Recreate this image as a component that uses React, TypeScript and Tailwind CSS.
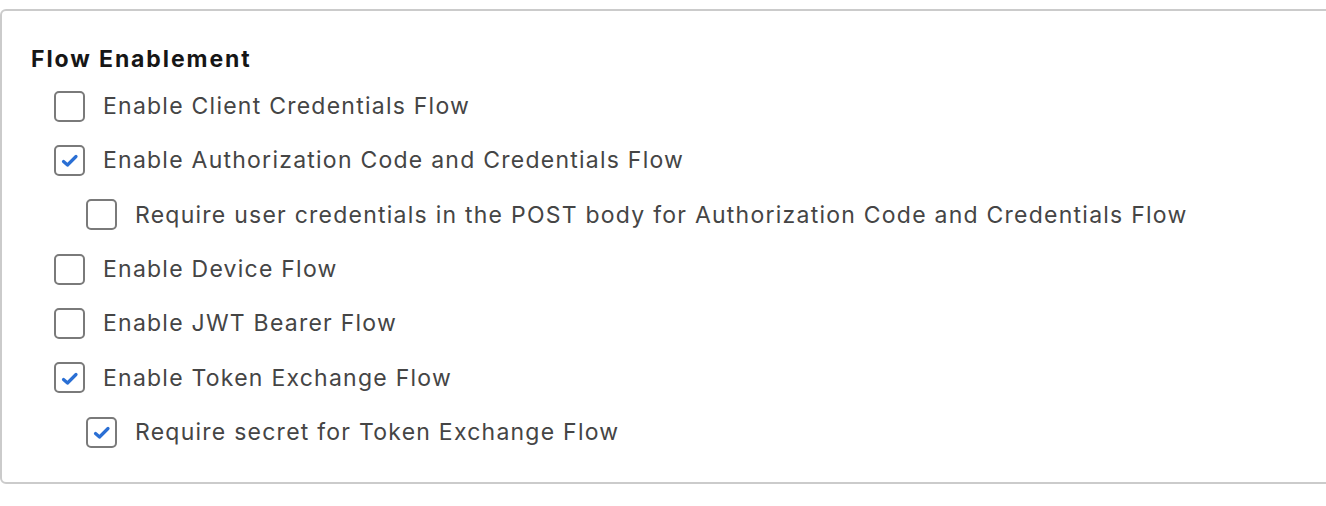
import React from "react";

type Item = { label: string; checked: boolean; nested?: boolean };

const ITEMS: Item[] = [
  { label: "Enable Client Credentials Flow", checked: false },
  { label: "Enable Authorization Code and Credentials Flow", checked: true },
  { label: "Require user credentials in the POST body for Authorization Code and Credentials Flow", checked: false, nested: true },
  { label: "Enable Device Flow", checked: false },
  { label: "Enable JWT Bearer Flow", checked: false },
  { label: "Enable Token Exchange Flow", checked: true },
  { label: "Require secret for Token Exchange Flow", checked: true, nested: true },
];

function Box({ checked }: { checked: boolean }) {
  return (
    <span className="w-[31px] h-[31px] flex-shrink-0 rounded-[5px] border-2 border-[#7a7a7a] bg-white flex items-center justify-center">
      {checked && (
        <svg width="18" height="14" viewBox="0 0 18 14" fill="none" className="mt-[2px]">
          <path d="M2.5 7.5 L6.5 11 L15 2.5" stroke="#2a6fd4" strokeWidth="3.2" strokeLinecap="round" strokeLinejoin="round" />
        </svg>
      )}
    </span>
  );
}

export default function App() {
  return (
    <div className="w-[1326px] h-[506px] bg-white pt-[9px] overflow-hidden" style={{ fontFamily: "Inter, 'Helvetica Neue', Arial, sans-serif" }}>
      <div className="w-[1340px] h-[475px] border-2 border-[#cbcbcb] rounded-[6px] pt-[34px] pl-[29px]">
        <h2 className="text-[23px] leading-[28px] font-bold tracking-[1.9px] text-[#161616] mb-[6px]">Flow Enablement</h2>
        <div className="flex flex-col">
          {ITEMS.map((it) => (
            <label
              key={it.label}
              className={`h-[54.33px] flex items-center gap-[18px] ${it.nested ? "pl-[55px]" : "pl-[23px]"}`}
            >
              <Box checked={it.checked} />
              <span className="text-[23px] tracking-[1.24px] text-[#454545] whitespace-nowrap">{it.label}</span>
            </label>
          ))}
        </div>
      </div>
    </div>
  );
}
